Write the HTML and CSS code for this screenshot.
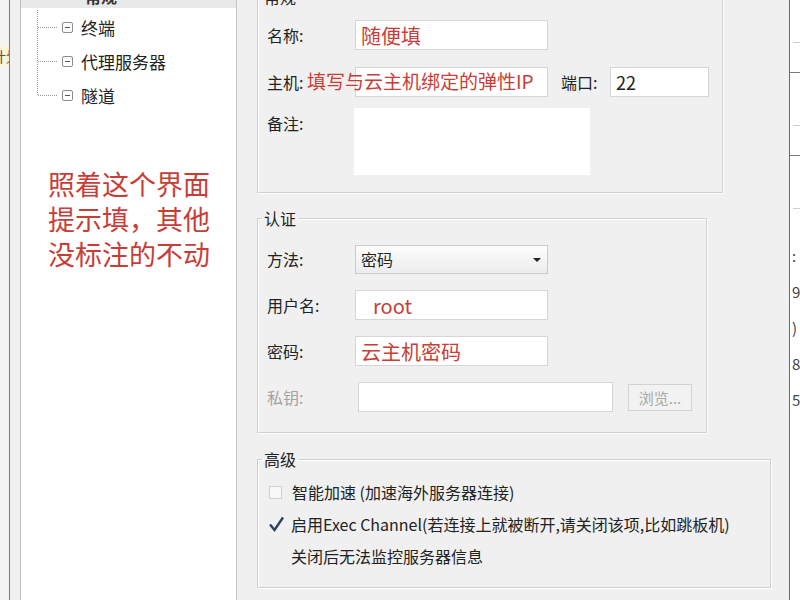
FILE: index.html
```html
<!DOCTYPE html>
<html lang="zh-CN">
<head>
    <meta charset="UTF-8">
    <meta name="viewport" content="width=device-width, initial-scale=1.0">
    <title>新建会话</title>
    <link rel="stylesheet" href="styles.css">
</head>
<body>
    <div class="window">
        <div class="edge-left">
            <span class="tip">计划</span>
        </div>

        <div class="tree-wrap">
            <div class="tree">
                <div class="tree-head">常规</div>
                <ul class="tree-list">
                    <li><span class="toggle"></span>终端</li>
                    <li><span class="toggle"></span>代理服务器</li>
                    <li><span class="toggle"></span>隧道</li>
                </ul>
                <p class="note">照着这个界面<br>提示填，其他<br>没标注的不动</p>
            </div>
        </div>

        <div class="main">
            <fieldset class="group group-general">
                <legend>常规</legend>
                <div class="row row-first">
                    <label class="label">名称:</label>
                    <div class="input input-mid"><span class="hint">随便填</span></div>
                </div>
                <div class="row row-host">
                    <label class="label">主机:</label>
                    <div class="input input-mid"></div>
                    <label class="label label-port">端口:</label>
                    <div class="input input-port">22</div>
                    <span class="hint hint-host">填写与云主机绑定的弹性IP</span>
                </div>
                <div class="row row-notes">
                    <label class="label">备注:</label>
                    <div class="textarea"></div>
                </div>
            </fieldset>

            <fieldset class="group group-auth">
                <legend>认证</legend>
                <div class="row row-first">
                    <label class="label">方法:</label>
                    <div class="select">密码<span class="arrow"></span></div>
                </div>
                <div class="row">
                    <label class="label">用户名:</label>
                    <div class="input input-mid"><span class="hint hint-root">root</span></div>
                </div>
                <div class="row">
                    <label class="label">密码:</label>
                    <div class="input input-mid"><span class="hint">云主机密码</span></div>
                </div>
                <div class="row">
                    <label class="label label-key">私钥:</label>
                    <div class="input input-key"></div>
                    <button class="browse" disabled>浏览...</button>
                </div>
            </fieldset>

            <fieldset class="group group-advanced">
                <legend>高级</legend>
                <div class="check-row check-row-first">
                    <span class="checkbox"></span>
                    智能加速 (加速海外服务器连接)
                </div>
                <div class="check-row">
                    <svg class="checkmark" width="17" height="16" viewBox="0 0 17 16">
                        <path d="M2 8.5 L6.5 14 L15 1.5" fill="none" stroke="#2c4260" stroke-width="2.4"/>
                    </svg>
                    启用Exec Channel(若连接上就被断开,请关闭该项,比如跳板机)
                </div>
                <div class="check-row check-row-note">关闭后无法监控服务器信息</div>
            </fieldset>
        </div>

        <div class="edge-right">
            <div class="rule rule-light"></div>
            <div class="rule rule-dark"></div>
            <div class="rule rule-light"></div>
            <div class="rule rule-dark"></div>
            <div class="rule rule-light"></div>
            <div class="frag">:</div>
            <div class="frag">9</div>
            <div class="frag">)</div>
            <div class="frag">8</div>
            <div class="frag">5</div>
        </div>
    </div>
</body>
</html>
```

FILE: styles.css
```css
body {
    margin: 0;
    font-family: "Noto Sans CJK SC", "Noto Sans", sans-serif;
    font-size: 16px;
    color: #222;
    background-color: #f0f0f0;
    overflow: hidden;
}

.window {
    display: flex;
    width: 800px;
    height: 600px;
    overflow: hidden;
}

/* bordas de fora */
.edge-left {
    width: 9px;
    flex-shrink: 0;
    background-color: #f4f4f4;
    border-right: 1px solid #7d7d7d;
    overflow: hidden;
}

.tip {
    display: block;
    margin-top: 46px;
    margin-left: -8px;
    width: 20px;
    height: 20px;
    line-height: 20px;
    font-size: 14px;
    white-space: nowrap;
    background-color: #fbf4d6;
    color: #555;
}

.edge-right {
    width: 10px;
    flex-shrink: 0;
    background-color: #fff;
    border-left: 1px solid #6a6a6a;
    overflow: hidden;
    padding-top: 42px;
}

.rule {
    height: 1px;
    margin-bottom: 29px;
}

.rule-light {
    background-color: #cfcfcf;
    margin-left: 3px;
}

.rule-dark {
    background-color: #7a7a7a;
    margin-bottom: 52px;
}

.frag {
    font-size: 15px;
    line-height: 36px;
    color: #444;
    margin-left: 2px;
}

/* arvore */
.tree-wrap {
    width: 217px;
    flex-shrink: 0;
    padding-left: 10px;
    background-color: #f0f0f0;
}

.tree {
    height: 100%;
    background-color: #fff;
    border-left: 1px solid #bdbdbd;
    border-right: 1px solid #c4c4c4;
    overflow: hidden;
}

.tree-head {
    margin-top: -14px;
    height: 22px;
    line-height: 20px;
    padding-left: 64px;
    background-color: #e9e9e9;
    font-weight: bold;
    color: #333;
}

.tree-list {
    position: relative;
    list-style: none;
    margin: 0;
    padding: 2px 0 0 0;
    font-size: 17px;
}

.tree-list::before {
    content: "";
    position: absolute;
    left: 16px;
    top: 2px;
    bottom: 17px;
    border-left: 1px dotted #9a9a9a;
}

.tree-list li {
    position: relative;
    display: flex;
    align-items: center;
    height: 34px;
    padding-left: 41px;
}

.tree-list li::before {
    content: "";
    position: absolute;
    left: 17px;
    top: 17px;
    width: 19px;
    border-top: 1px dotted #9a9a9a;
}

.toggle {
    position: relative;
    width: 9px;
    height: 9px;
    margin-right: 8px;
    border: 1px solid #8c8c8c;
    border-radius: 2px;
}

.toggle::after {
    content: "";
    position: absolute;
    left: 2px;
    right: 2px;
    top: 4px;
    border-top: 1px solid #555;
}

.note {
    margin: 54px 0 0 27px;
    font-size: 27px;
    line-height: 35px;
    color: #c93d37;
}

/* formulario */
.main {
    flex: 1;
    padding-left: 20px;
}

.group {
    box-sizing: border-box;
    margin: 0;
    padding: 0;
    border: 1px solid #cfcfcf;
    box-shadow: inset 1px 1px 0 #fff, 1px 1px 0 #fff;
}

.group legend {
    margin-left: 4px;
    padding: 0 2px;
    line-height: 20px;
    color: #222;
}

.group-general {
    width: 466px;
    margin-top: -13px;
    padding-bottom: 17px;
}

.group-auth {
    width: 450px;
    margin-top: 15px;
    padding-bottom: 20px;
}

.group-advanced {
    width: 514px;
    margin-top: 16px;
    padding-bottom: 15px;
}

.row {
    position: relative;
    display: flex;
    align-items: center;
    height: 30px;
    padding-left: 9px;
    margin-top: 16px;
}

.row-first {
    margin-top: 13px;
}

.group-general .row-host {
    margin-top: 17px;
}

.group-auth .row-first {
    margin-top: 16px;
}

.label {
    width: 88px;
    flex-shrink: 0;
}

.label-key {
    width: 91px;
    color: #a3a3a3;
}

.label-port {
    width: 49px;
    margin-left: 13px;
}

.input {
    box-sizing: border-box;
    height: 30px;
    background-color: #fff;
    border: 1px solid #d6d6d6;
    padding-left: 5px;
    display: flex;
    align-items: center;
    font-size: 18px;
}

.input-mid {
    width: 193px;
}

.input-port {
    width: 99px;
}

.input-key {
    width: 255px;
}

.hint {
    font-size: 20px;
    color: #c93d37;
}

.hint-root {
    margin-left: 12px;
}

.hint-host {
    position: absolute;
    left: 49px;
    top: 2px;
    font-size: 19px;
    line-height: 24px;
}

.row-notes {
    align-items: flex-start;
    height: 67px;
    margin-top: 11px;
}

.row-notes .label {
    margin-top: 3px;
    width: 87px;
}

.textarea {
    width: 236px;
    height: 67px;
    background-color: #fff;
}

.select {
    position: relative;
    box-sizing: border-box;
    width: 193px;
    height: 29px;
    padding-left: 5px;
    line-height: 27px;
    border: 1px solid #cbcbcb;
    background: linear-gradient(#fdfdfd, #ececec);
}

.arrow {
    position: absolute;
    right: 6px;
    top: 12px;
    border-left: 4px solid transparent;
    border-right: 4px solid transparent;
    border-top: 4px solid #222;
}

.browse {
    margin-left: 15px;
    width: 64px;
    height: 27px;
    padding: 0;
    font-family: inherit;
    font-size: 15px;
    color: #a8a8a8;
    background-color: #f2f2f2;
    border: 1px solid #d2d2d2;
}

.check-row {
    display: flex;
    align-items: center;
    height: 32px;
    padding-left: 11px;
}

.check-row-first {
    margin-top: 7px;
}

.check-row-note {
    padding-left: 33px;
}

.checkbox {
    box-sizing: border-box;
    width: 13px;
    height: 13px;
    margin-right: 10px;
    border: 1px solid #d0d0d0;
    background-color: #f8f8f8;
}

.checkmark {
    margin-left: -1px;
    margin-right: 6px;
}
```
